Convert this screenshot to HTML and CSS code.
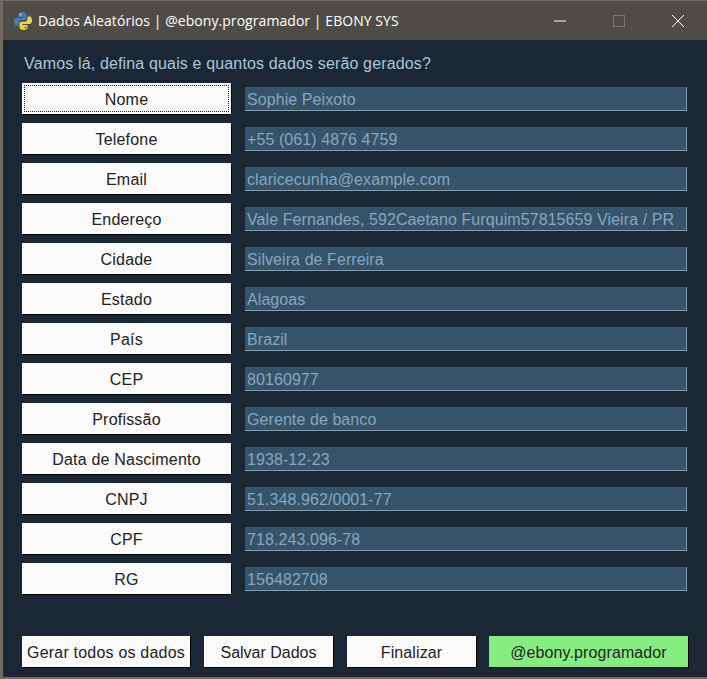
FILE: index.html
```html
<!doctype html>
<html>
<head>
  <title>Dados Aleatórios</title>
  <meta charset="utf-8">
  <link rel="stylesheet" href="styles.css">
</head>
<body>
  <div class="window">
    <div class="titlebar">
      <svg class="logo" width="20" height="20" viewBox="0 0 20 20">
        <path fill="#3f7fb5" d="M9.500 1C6.500 1 5.500 2.200 5.500 4v2h5v1H3.500C1.800 7 1 8.500 1 10.500s.8 4 2.500 4H5.500v-2.500c0-1.500 1.200-2.700 2.700-2.700h3.300c1.200 0 2-.9 2-2V4c0-1.800-1.500-3-4-3z"/>
        <path fill="#f4cf4a" d="M10.500 19c3 0 4-1.200 4-3v-2h-5v-1h7c1.700 0 2.500-1.500 2.500-3.500s-.8-4-2.500-4h-2v2.500c0 1.500-1.200 2.700-2.700 2.700H8.500c-1.200 0-2 .9-2 2V16c0 1.800 1.500 3 4 3z"/>
        <circle cx="7.500" cy="3.500" r=".9" fill="#dfe8ee"/>
        <circle cx="12.500" cy="16.500" r=".9" fill="#6b5a20"/>
      </svg>
      <span class="title">Dados Aleatórios | @ebony.programador | EBONY SYS</span>
      <div class="controls">
        <svg width="14" height="14" viewBox="0 0 14 14"><path d="M1 7h12" stroke="#fff" fill="none"/></svg>
        <svg width="14" height="14" viewBox="0 0 14 14"><rect x="1.500" y="1.500" width="11" height="11" stroke="#77736e" fill="none"/></svg>
        <svg width="14" height="14" viewBox="0 0 14 14"><path d="M1 1l12 12M13 1L1 13" stroke="#fff" fill="none"/></svg>
      </div>
    </div>
    <div class="content">
      <p class="lead">Vamos lá, defina quais e quantos dados serão gerados?</p>
      <div class="rows">
        <div class="row"><button class="btn focus">Nome</button><div class="field">Sophie Peixoto</div></div>
        <div class="row"><button class="btn">Telefone</button><div class="field">+55 (061) 4876 4759</div></div>
        <div class="row"><button class="btn">Email</button><div class="field">claricecunha@example.com</div></div>
        <div class="row"><button class="btn">Endereço</button><div class="field">Vale Fernandes, 592Caetano Furquim57815659 Vieira / PR</div></div>
        <div class="row"><button class="btn">Cidade</button><div class="field">Silveira de Ferreira</div></div>
        <div class="row"><button class="btn">Estado</button><div class="field">Alagoas</div></div>
        <div class="row"><button class="btn">País</button><div class="field">Brazil</div></div>
        <div class="row"><button class="btn">CEP</button><div class="field">80160977</div></div>
        <div class="row"><button class="btn">Profissão</button><div class="field">Gerente de banco</div></div>
        <div class="row"><button class="btn">Data de Nascimento</button><div class="field">1938-12-23</div></div>
        <div class="row"><button class="btn">CNPJ</button><div class="field">51.348.962/0001-77</div></div>
        <div class="row"><button class="btn">CPF</button><div class="field">718.243.096-78</div></div>
        <div class="row"><button class="btn">RG</button><div class="field">156482708</div></div>
      </div>
      <div class="actions">
        <button class="btn gerar">Gerar todos os dados</button>
        <button class="btn salvar">Salvar Dados</button>
        <button class="btn finalizar">Finalizar</button>
        <button class="btn insta">@ebony.programador</button>
      </div>
    </div>
  </div>
</body>
</html>
```

FILE: styles.css
```css
html, body{
  margin: 0;
  height: 100%;
}
body{
  background-color: #6f6a62;
  font-family: "Liberation Sans", Arial, sans-serif;
  overflow: hidden;
}
.window{
  margin: 1px 0 2px 3px;
  height: 676px;
  display: flex;
  flex-direction: column;
}
.titlebar{
  height: 39px;
  flex: none;
  background-color: #4f4c48;
  color: #fff;
  display: flex;
  align-items: center;
  padding-left: 10px;
  font-family: "Open Sans", sans-serif;
  font-size: 14px;
  letter-spacing: .06px;
}
.logo{
  margin-right: 5px;
}
.title{
  flex: 1;
}
.controls{
  display: flex;
  gap: 45px;
  margin-right: 22px;
}
.content{
  flex: 1;
  background-color: #1b2735;
  padding: 0 20px 0 19px;
  display: flex;
  flex-direction: column;
}
.lead{
  margin: 15px 0 0 2px;
  height: 28px;
  font-size: 16px;
  line-height: 18px;
  letter-spacing: .15px;
  color: #a9c6dc;
}
.rows{
  display: flex;
  flex-direction: column;
  gap: 9px;
}
.row{
  display: flex;
  align-items: flex-start;
  gap: 14px;
}
.btn{
  height: 31px;
  width: 209px;
  flex: none;
  border: 0;
  padding: 2px 0 0;
  background-color: #fbfafa;
  box-shadow: 1px 1px 0 #000;
  color: #222;
  font-family: "Liberation Sans", Arial, sans-serif;
  font-size: 16px;
  letter-spacing: .2px;
}
.focus{
  outline: 1px dotted #222;
  outline-offset: -3px;
}
.field{
  width: 439px;
  height: 23px;
  margin-top: 4px;
  padding-left: 2px;
  background-color: #35546b;
  border-right: 1px solid #8a9dab;
  border-bottom: 1px solid #8a9dab;
  color: #86a6bc;
  font-size: 16px;
  line-height: 25px;
  letter-spacing: .08px;
  white-space: nowrap;
  overflow: hidden;
}
.actions{
  display: flex;
  margin-top: 42px;
}
.gerar{
  width: 168px;
  margin-right: 14px;
}
.salvar{
  width: 129px;
  margin-right: 14px;
  letter-spacing: 0;
}
.finalizar{
  width: 129px;
  margin-right: 13px;
  letter-spacing: .1px;
}
.insta{
  width: 199px;
  background-color: #86ee80;
  letter-spacing: .1px;
}
```
